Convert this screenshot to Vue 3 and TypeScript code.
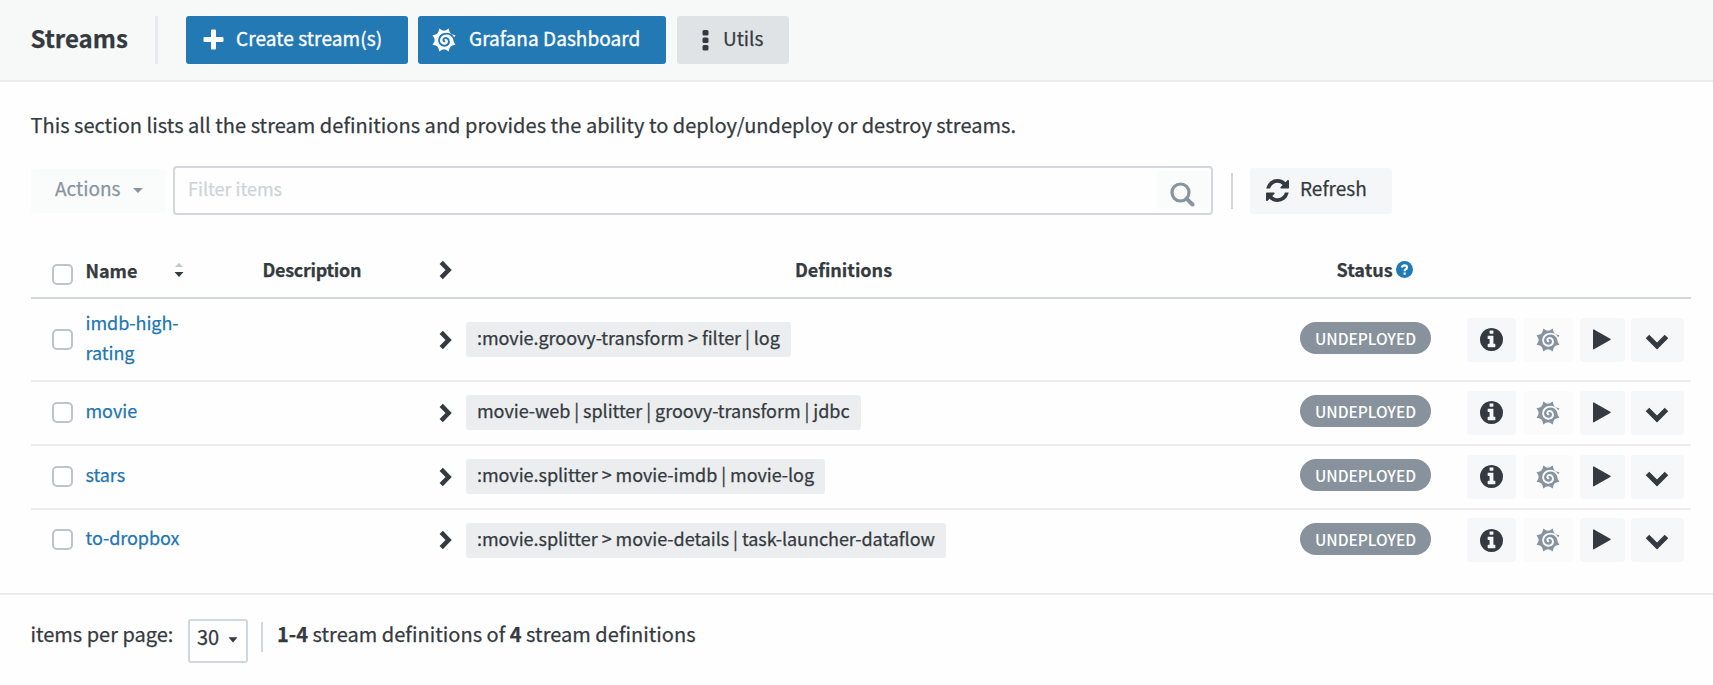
<script setup lang="ts">
import { defineComponent, h } from 'vue'

interface Stream {
  name: string
  definition: string
}

const streams: Stream[] = [
  { name: 'imdb-high-rating', definition: ':movie.groovy-transform > filter | log' },
  { name: 'movie', definition: 'movie-web | splitter | groovy-transform | jdbc' },
  { name: 'stars', definition: ':movie.splitter > movie-imdb | movie-log' },
  { name: 'to-dropbox', definition: ':movie.splitter > movie-details | task-launcher-dataflow' },
]

// Outline of an eight-toothed cog in a 24x24 box
const cog = Array.from({ length: 32 }, (_, i) => {
  const radius = [12.4, 10, 9.3, 10][i % 4]
  const angle = (i / 32) * Math.PI * 2 - Math.PI / 2 - Math.PI / 8
  return `${(12 + radius * Math.cos(angle)).toFixed(2)} ${(12 + radius * Math.sin(angle)).toFixed(2)}`
})
const cogPath = `M${cog.join('L')}Z`
const swirlPath =
  'M22.5 11.5C19.800 6 15.500 4.900 11.600 6.200C7 7.800 6 12.800 8.100 15.700C10.800 19.200 16.600 17.900 17 13.900C17 10.500 13.900 9.100 12.100 10.400C10.700 11.600 11.400 13.600 13.100 13.200'

const GrafanaIcon = defineComponent({
  setup: () => () =>
    h('svg', { viewBox: '0 0 24 24', width: 24, height: 24 }, [
      h('path', { d: cogPath, fill: 'currentColor' }),
      h('path', { d: swirlPath, fill: 'none', stroke: 'var(--surface)', 'stroke-width': 1.9 }),
    ]),
})

const ChevronIcon = defineComponent({
  setup: () => () =>
    h('svg', { viewBox: '0 0 13 20', width: 13, height: 20 }, [
      h('path', { d: 'M2.2 2.4L9.6 10L2.2 17.6', fill: 'none', stroke: 'currentColor', 'stroke-width': 4.5 }),
    ]),
})
</script>

<template>
  <div class="page">
    <header class="topbar">
      <h1>Streams</h1>
      <span class="topbar-divider"></span>
      <button class="btn primary create">
        <svg class="plus" viewBox="0 0 21 21" width="21" height="21">
          <path d="M8 1.5Q8 .5 9 .5h3q1 0 1 1V8h6.500q1 0 1 1v3q0 1-1 1H13v6.500q0 1-1 1H9q-1 0-1-1V13H1.500q-1 0-1-1V9q0-1 1-1H8z" fill="currentColor" />
        </svg>
        <span>Create stream(s)</span>
      </button>
      <button class="btn primary grafana">
        <GrafanaIcon />
        <span>Grafana Dashboard</span>
      </button>
      <button class="btn utils">
        <svg viewBox="0 0 7 22" width="7" height="22">
          <g fill="currentColor">
            <rect x=".5" y="1" width="6" height="5.500" rx="1.500" />
            <rect x=".5" y="8.500" width="6" height="5.500" rx="1.500" />
            <rect x=".5" y="16" width="6" height="5.500" rx="1.500" />
          </g>
        </svg>
        <span>Utils</span>
      </button>
    </header>

    <main>
      <p class="intro">This section lists all the stream definitions and provides the ability to deploy/undeploy or destroy streams.</p>

      <div class="toolbar">
        <button class="btn actions">
          <span>Actions</span>
          <svg viewBox="0 0 10 5" width="10" height="5"><path d="M0 0H10L5 5Z" fill="currentColor" /></svg>
        </button>
        <div class="filter">
          <input type="text" placeholder="Filter items" />
          <button class="search">
            <svg viewBox="0 0 25 25" width="25" height="25">
              <circle cx="10.500" cy="10.500" r="8.500" fill="none" stroke="currentColor" stroke-width="3.200" />
              <path d="M16.800 16.800L22.500 22.500" stroke="currentColor" stroke-width="4" stroke-linecap="round" />
            </svg>
          </button>
        </div>
        <span class="toolbar-divider"></span>
        <button class="btn refresh">
          <svg viewBox="0 0 1536 1536" width="23" height="23">
            <path fill="currentColor" d="M1511 928q0 5-1 7-64 268-268 434.500t-478 166.500q-146 0-282.500-55t-243.500-157l-129 129q-19 19-45 19t-45-19-19-45v-448q0-26 19-45t45-19h448q26 0 45 19t19 45-19 45l-137 137q71 66 161 102t187 36q134 0 250-65t186-179q11-17 53-117 8-23 30-23h192q13 0 22.500 9.500t9.500 22.500zm25-800v448q0 26-19 45t-45 19h-448q-26 0-45-19t-19-45 19-45l138-138q-148-137-349-137-134 0-250 65t-186 179q-11 17-53 117-8 23-30 23h-199q-13 0-22.500-9.500t-9.500-22.500v-7q65-268 270-434.500t480-166.500q146 0 284 55.500t245 156.500l130-129q19-19 45-19t45 19 19 45z" />
          </svg>
          <span>Refresh</span>
        </button>
      </div>

      <section class="table">
        <div class="row head">
          <span class="box"></span>
          <div class="head-name">
            <b>Name</b>
            <svg viewBox="0 0 10 16" width="10" height="16">
              <path d="M1 5L5 .8L9 5Z" fill="#c3c9ce" />
              <path d="M.5 10H9.500L5 15Z" fill="#343a40" />
            </svg>
          </div>
          <b class="head-description">Description</b>
          <ChevronIcon class="arrow" />
          <b class="head-definitions">Definitions</b>
          <div class="head-status">
            <b>Status</b>
            <svg viewBox="0 0 17 17" width="17" height="17">
              <circle cx="8.500" cy="8.500" r="8.500" fill="#2179b5" />
              <path d="M5.800 6.500Q6.300 4.400 8.500 4.400Q11 4.500 11 6.500Q11 7.800 9.500 8.500Q8.600 9 8.600 10.300" fill="none" stroke="#fff" stroke-width="2.100" />
              <rect x="7.500" y="11.500" width="2.200" height="2.200" fill="#fff" />
            </svg>
          </div>
        </div>

        <div v-for="stream in streams" :key="stream.name" class="row body">
          <span class="box"></span>
          <a class="name">{{ stream.name }}</a>
          <span></span>
          <ChevronIcon class="arrow" />
          <div><span class="chip">{{ stream.definition }}</span></div>
          <div><span class="pill">UNDEPLOYED</span></div>
          <div class="ops">
            <button class="op info">
              <svg viewBox="0 128 1536 1536" width="23" height="23">
                <path fill="currentColor" d="M1024 1376v-160q0-14-9-23t-23-9h-96v-512q0-14-9-23t-23-9h-320q-14 0-23 9t-9 23v160q0 14 9 23t23 9h96v320h-96q-14 0-23 9t-9 23v160q0 14 9 23t23 9h448q14 0 23-9t9-23zm-128-896v-160q0-14-9-23t-23-9h-192q-14 0-23 9t-9 23v160q0 14 9 23t23 9h192q14 0 23-9t9-23zm640 416q0 209-103 385.500t-279.500 279.500-385.500 103-385.500-103-279.500-279.500-103-385.500 103-385.500 279.500-279.500 385.500-103 385.500 103 279.500 279.500 103 385.500z" />
              </svg>
            </button>
            <button class="op metrics"><GrafanaIcon /></button>
            <button class="op play">
              <svg viewBox="0 0 18 21" width="18" height="21"><path d="M0 .8Q0 0 .9 .5L17.300 9.800Q18.100 10.500 17.300 11L.9 20.300Q0 20.800 0 20Z" fill="currentColor" /></svg>
            </button>
            <button class="op more">
              <svg viewBox="0 0 24 16" width="24" height="16"><path d="M2.500 2.500L12 12L21.500 2.500" fill="none" stroke="currentColor" stroke-width="5" /></svg>
            </button>
          </div>
        </div>
      </section>
    </main>

    <footer>
      <span class="per-page">items per page:</span>
      <div class="select">
        <span>30</span>
        <svg viewBox="0 0 10 6" width="10" height="6"><path d="M.5 .3H9.500L5 5.500Z" fill="currentColor" /></svg>
      </div>
      <span class="footer-divider"></span>
      <span class="summary"><b>1-4</b> stream definitions of <b>4</b> stream definitions</span>
    </footer>
  </div>
</template>

<style>
body {
  background: #fefefe;
}
</style>

<style scoped>
.page {
  width: 1713px;
  height: 685px;
  overflow: hidden;
  box-sizing: border-box;
  color: #343a40;
  font-family: "Noto Sans CJK SC", "Noto Sans", sans-serif;
  font-size: 18px;
  line-height: 30px;
  -webkit-text-stroke: 0.25px currentColor;
}
svg {
  display: block;
  flex: none;
}
button {
  margin: 0;
  padding: 0;
  border: 0;
  font: inherit;
  color: inherit;
}
.topbar {
  display: flex;
  box-sizing: border-box;
  height: 82px;
  padding: 16px 0 0 30.500px;
  background: #f7f8f8;
  border-bottom: 2px solid #ebecec;
}
h1 {
  width: 124.500px;
  margin: 0;
  font-size: 24px;
  line-height: 44px;
  font-weight: 700;
}
.topbar-divider {
  width: 3px;
  height: 48px;
  margin-right: 28px;
  background: #e9ecee;
}
.btn {
  display: flex;
  align-items: center;
  box-sizing: border-box;
  border-radius: 3px;
  font-size: 19px;
  white-space: nowrap;
}
.topbar .btn {
  height: 48px;
  padding-bottom: 1px;
}
.btn span {
  margin-top: -4px;
}
.primary {
  --surface: #2379b4;
  background: #2379b4;
  color: #fff;
  -webkit-text-stroke: 0.35px #fff;
}
.create {
  width: 222px;
  margin-right: 10px;
  padding-left: 17px;
  gap: 12px;
  letter-spacing: 0.1px;
}
.grafana {
  width: 248px;
  margin-right: 11px;
  padding-left: 14px;
  gap: 13px;
  letter-spacing: 0.05px;
}
.utils {
  width: 112px;
  padding-left: 25px;
  gap: 14px;
  background: #dfe3e6;
}
main {
  padding: 0 22px 0 31px;
}
.intro {
  margin: 0 0 0 -0.500px;
  padding-top: 27px;
  font-size: 20px;
  line-height: 32px;
  height: 57px;
  box-sizing: border-box;
  letter-spacing: 0.03px;
}
.toolbar {
  display: flex;
  align-items: center;
  margin-top: 27px;
  height: 48px;
  margin-bottom: 29px;
}
.toolbar .btn {
  margin-top: 1px;
}
.toolbar .btn span {
  margin-top: -6px;
}
.actions {
  width: 134px;
  height: 44px;
  padding-left: 24px;
  gap: 13px;
  background: #fafbfb;
  color: #8795a1;
}
.filter {
  display: flex;
  align-items: center;
  box-sizing: border-box;
  width: 1040px;
  height: 49px;
  margin-left: 8px;
  padding: 0 2px 0 13px;
  border: 2px solid #d1d7dc;
  border-radius: 4px;
}
.filter input {
  flex: 1;
  height: 30px;
  margin-top: -4px;
  padding: 0;
  border: 0;
  outline: 0;
  background: none;
  font: inherit;
}
.filter input::placeholder {
  color: #cfd4d9;
  opacity: 1;
}
.search {
  display: flex;
  align-items: flex-end;
  justify-content: center;
  width: 52px;
  height: 38px;
  padding: 0 2px 2px 0;
  box-sizing: border-box;
  background: #fafbfb;
  color: #8895a0;
}
.toolbar-divider {
  width: 2px;
  height: 36px;
  margin: 1px 17px 0 18px;
  background: #d1d7dc;
}
.toolbar .refresh {
  width: 142px;
  height: 46px;
  padding-left: 16px;
  gap: 11px;
  background: #f5f6f7;
}
.row {
  display: grid;
  grid-template-columns: 34.500px 177px 176.500px 27px 834px 167px 1fr;
  align-items: center;
  box-sizing: border-box;
  height: 64px;
  width: 1660px;
  padding-left: 20px;
  border-bottom: 2px solid #ebecee;
}
.row.body {
  padding-bottom: 1px;
}
.row.body:last-child {
  padding-bottom: 2px;
  border-bottom-color: transparent;
}
.row.body:nth-child(2) {
  height: 83px;
  padding-bottom: 0;
}
.row.head {
  height: 56px;
  border-bottom-color: #d0d8dc;
}
.box {
  box-sizing: border-box;
  width: 21px;
  height: 21px;
  margin-top: -1px;
  margin-left: 1px;
  border: 2px solid #bcc5cc;
  border-radius: 5px;
  background: #fff;
}
.head .box {
  margin-top: 8px;
}
.head-name {
  display: flex;
  align-items: center;
  justify-content: space-between;
  width: 98px;
}
.head-description {
  letter-spacing: -0.3px;
  margin-top: -3px;
}
.head-definitions {
  padding-right: 79px;
  margin-top: -2px;
  text-align: center;
}
.head-status {
  display: flex;
  align-items: center;
  gap: 3px;
  padding-left: 36.500px;
  margin-top: -3px;
}
.head-status svg {
  margin-top: 1px;
}
.name {
  width: 110px;
  margin-top: -6px;
  color: #2276b1;
  letter-spacing: -0.05px;
}
.chip {
  display: inline-block;
  vertical-align: middle;
  padding: 0 11px 5px;
  border-radius: 3px;
  background: #ebedef;
  white-space: nowrap;
  letter-spacing: -0.045px;
}
.pill {
  display: block;
  box-sizing: border-box;
  width: 131px;
  height: 32px;
  margin-top: -3px;
  border-radius: 16px;
  background: #87929c;
  color: #fff;
  font-size: 15.500px;
  font-weight: 500;
  line-height: 32px;
  text-align: center;
  -webkit-text-stroke: 0;
}
.ops {
  display: flex;
}
.op {
  display: flex;
  align-items: center;
  justify-content: center;
  height: 44px;
  border-radius: 3px;
  background: #f6f7f8;
}
.info {
  width: 49px;
  margin-right: 8px;
}
.metrics {
  --surface: #fbfbfc;
  width: 49px;
  margin-right: 7px;
  padding-right: 1px;
  box-sizing: border-box;
  background: #fbfbfc;
  color: #8794a0;
}
.play {
  width: 45px;
  margin-right: 6px;
  padding: 0 2px 1px 0;
  box-sizing: border-box;
}
.more {
  width: 53px;
  padding: 4px 2px 0 0;
  box-sizing: border-box;
}
footer {
  display: flex;
  align-items: flex-start;
  box-sizing: border-box;
  height: 92px;
  margin-top: 19px;
  padding: 24px 0 0 30.500px;
  border-top: 2px solid #ebecec;
  font-size: 20px;
}
.per-page {
  width: 157.500px;
}
.summary {
  letter-spacing: 0.03px;
}
.select {
  display: flex;
  align-items: center;
  box-sizing: border-box;
  width: 60px;
  height: 44px;
  padding: 0 8px 8px 7px;
  justify-content: space-between;
  border: 2px solid #d1d7dc;
  border-radius: 3px;
}
.select svg {
  margin-top: 6px;
}
.footer-divider {
  width: 2px;
  height: 30px;
  margin: 3px 14px 0 13px;
  background: #d1d7dc;
}
</style>
